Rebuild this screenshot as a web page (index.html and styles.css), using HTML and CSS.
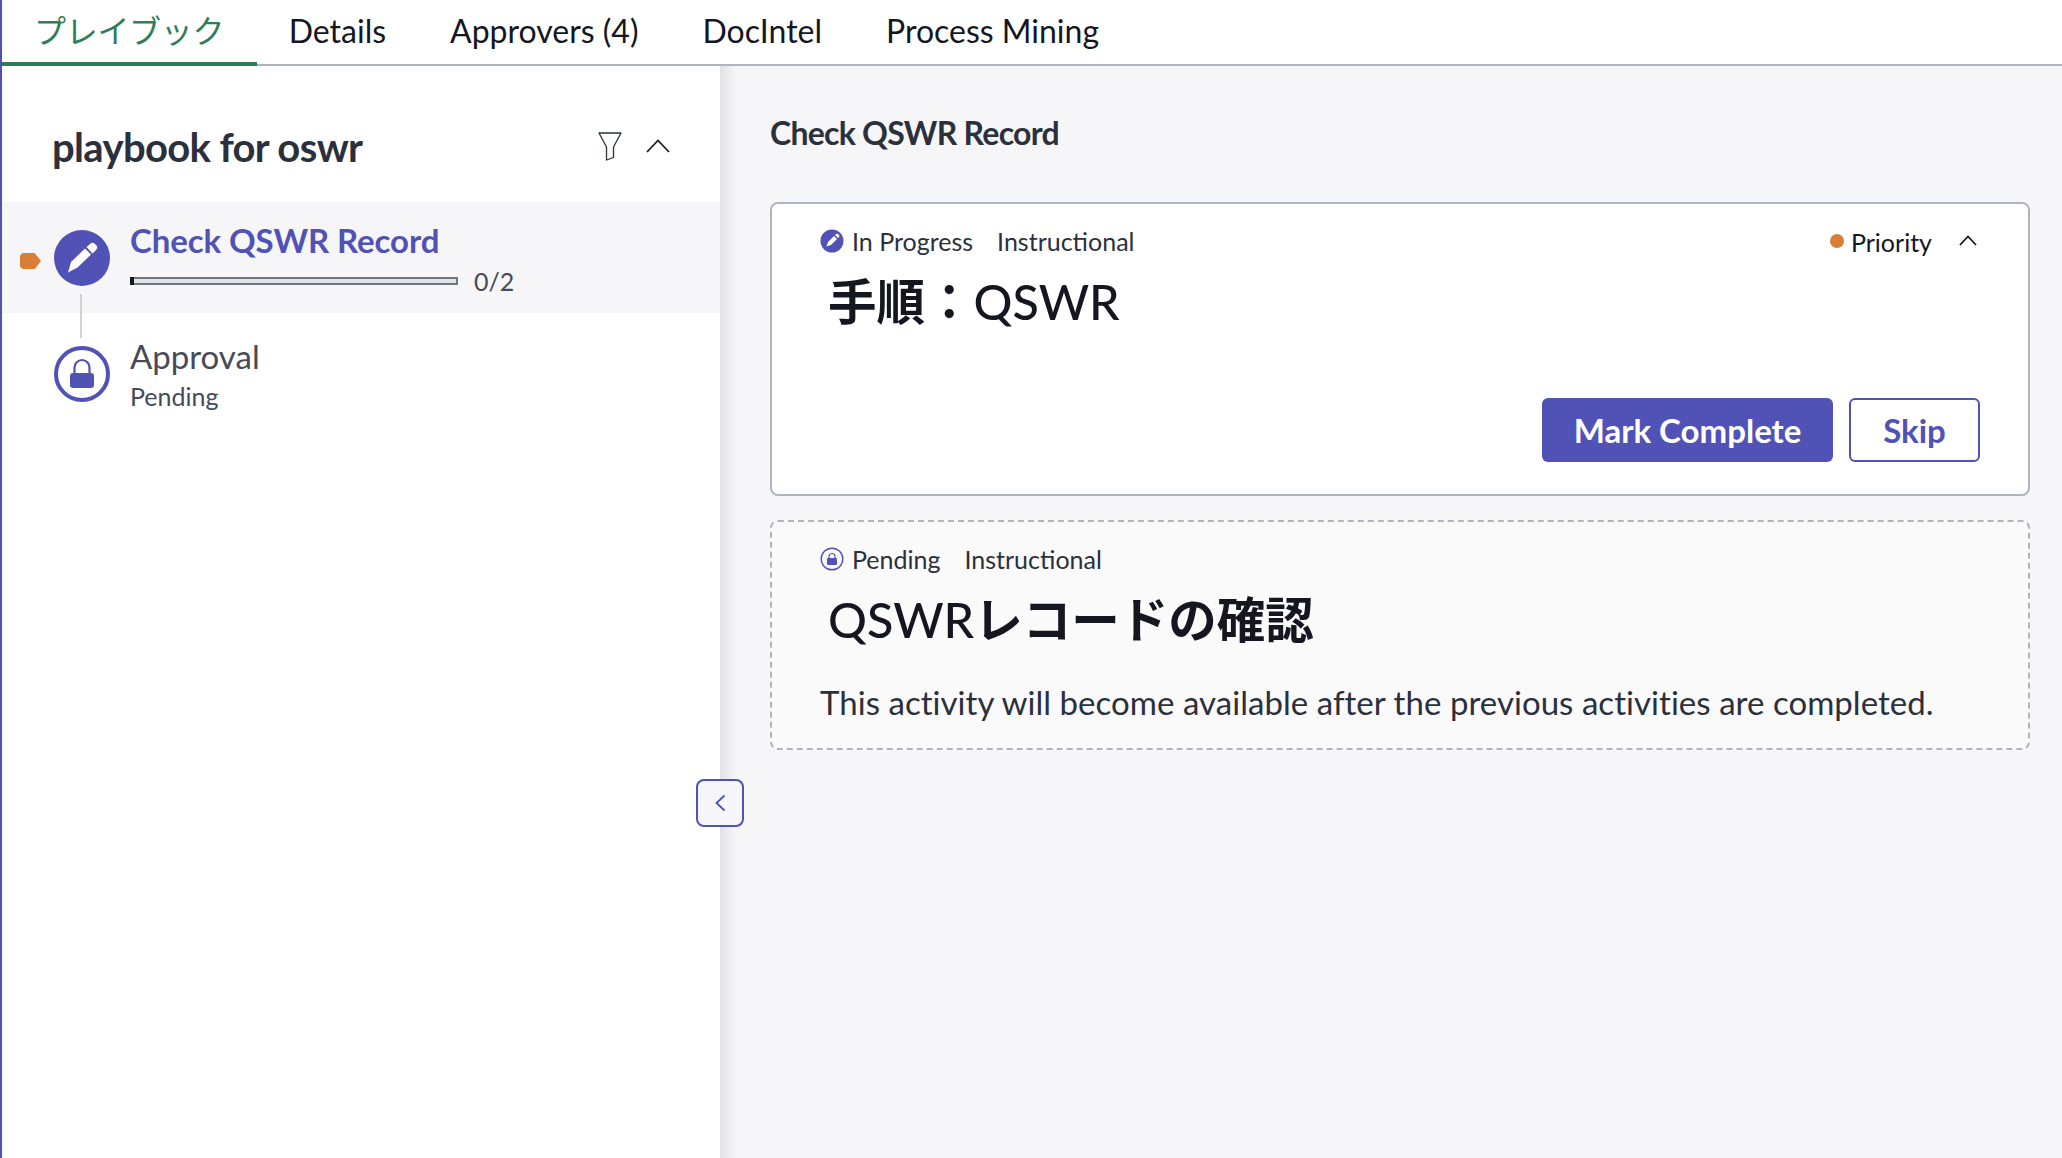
FILE: index.html
```html
<!DOCTYPE html>
<html lang="ja">
<head>
<meta charset="utf-8">
<title>Playbook</title>
<link rel="stylesheet" href="styles.css">
</head>
<body>
<div class="app">
  <nav class="tabs">
    <a class="tab active">プレイブック</a>
    <a class="tab">Details</a>
    <a class="tab">Approvers (4)</a>
    <a class="tab">DocIntel</a>
    <a class="tab">Process Mining</a>
  </nav>
  <div class="content">
    <aside class="sidebar">
      <header class="side-head">
        <h1 class="side-title">playbook for oswr</h1>
        <div class="side-tools">
          <svg class="filter-icon" viewBox="0 0 24 29" width="24" height="29"><path d="M1 1h22l-7.500 14v10.500L8.500 28V15z" fill="none" stroke="#2b303c" stroke-width="1.300" stroke-linejoin="round"/></svg>
          <svg class="chev-lg" viewBox="0 0 24 14" width="24" height="14"><path d="M1 13 12 1.500 23 13" fill="none" stroke="#1b1e26" stroke-width="1.800"/></svg>
        </div>
      </header>
      <div class="step current">
        <span class="flag"></span>
        <span class="step-icon filled">
          <svg viewBox="0 0 56 56" width="56" height="56"><path d="M14 42.500 17 32 31 18.500l6 6L23.500 37.500z" fill="#fff"/><path d="M32.500 17 36 14a3.500 3.500 0 0 1 5 0l1 1a3.500 3.500 0 0 1 0 5l-3.500 3.500z" fill="#fff"/></svg>
        </span>
        <div class="step-body">
          <div class="step-name">Check QSWR Record</div>
          <div class="progress-row">
            <div class="progress"><span class="progress-fill"></span></div>
            <span class="progress-count">0/2</span>
          </div>
        </div>
      </div>
      <div class="connector"></div>
      <div class="step pending">
        <span class="step-icon outlined">
          <svg class="lock-lg" viewBox="0 0 56 56" width="56" height="56"><path d="M20.500 28v-6.500a7.500 7.500 0 0 1 15 0V28" fill="none" stroke="#5052b5" stroke-width="2.200"/><rect x="16" y="27" width="24" height="15" rx="3" fill="#5052b5"/></svg>
        </span>
        <div class="step-body">
          <div class="pending-name">Approval</div>
          <div class="pending-sub">Pending</div>
        </div>
      </div>
    </aside>
    <button class="collapse" type="button" aria-label="Collapse">
      <svg viewBox="0 0 12 18" width="12" height="18"><path d="M10.500 1.500 2.500 9l8 7.500" fill="none" stroke="#5052b5" stroke-width="1.800"/></svg>
    </button>
    <main class="main">
      <h2 class="main-title">Check QSWR Record</h2>
      <section class="card active-card">
        <div class="card-meta">
          <div class="meta-left">
            <svg class="meta-icon" viewBox="0 0 24 24" width="24" height="24"><circle cx="12" cy="12" r="11.500" fill="#5052b5"/><path d="M6.500 17.500l1.500-4.500 6-6 3 3-6 6z M15 6l1-1c.6-.5 1.400-.5 2 0l1 1c.5.600.5 1.400 0 2l-1 1z" fill="#fff"/></svg>
            <span>In Progress</span>
            <span class="meta-type">Instructional</span>
          </div>
          <div class="meta-right">
            <span class="priority-dot"></span>
            <span>Priority</span>
            <svg class="meta-chev" viewBox="0 0 18 11" width="18" height="11"><path d="M1 10 9 1.500 17 10" fill="none" stroke="#14171f" stroke-width="1.800"/></svg>
          </div>
        </div>
        <h3 class="card-title"><span class="cjk">手順：</span>QSWR</h3>
        <div class="card-actions">
          <button class="btn primary" type="button">Mark Complete</button>
          <button class="btn secondary" type="button">Skip</button>
        </div>
      </section>
      <section class="card pending-card">
        <div class="card-meta">
          <div class="meta-left">
            <svg class="meta-icon" viewBox="0 0 24 24" width="24" height="24"><circle cx="12" cy="12" r="10.800" fill="none" stroke="#5052b5" stroke-width="1.400"/><path d="M9 11.500V9.500a3 3 0 0 1 6 0v2" fill="none" stroke="#5052b5" stroke-width="1.200"/><rect x="7" y="11" width="10" height="7" rx="1.300" fill="#5052b5"/></svg>
            <span>Pending</span>
            <span class="meta-type">Instructional</span>
          </div>
        </div>
        <h3 class="card-title">QSWR<span class="cjk">レコードの確認</span></h3>
        <p class="card-note">This activity will become available after the previous activities are completed.</p>
      </section>
    </main>
  </div>
</div>
</body>
</html>
```
FILE: styles.css
```css
* { box-sizing: border-box; }
html, body { margin: 0; height: 100%; overflow: hidden; background: #fff; }
body { font-family: "Lato", "Noto Sans CJK JP", sans-serif; color: #14171f; }
.app { height: 1158px; display: flex; flex-direction: column; border-left: 2px solid #5052b5; }
.tabs { display: flex; height: 66px; flex: none; border-bottom: 2px solid #b0b4be; }
.tab { height: 66px; padding: 0 32px; font-size: 32px; line-height: 62px; color: #14171f; }
.tab.active { color: #2e7d5b; border-bottom: 4px solid #2e7d5b; font-weight: 400; letter-spacing: -0.3px; padding-right: 32.500px; }
.content { flex: 1; display: flex; position: relative; min-height: 0; }
.sidebar { width: 718px; flex: none; background: #fff; }
.side-head { height: 136px; display: flex; justify-content: space-between; align-items: flex-start; padding: 57px 50px 0 50px; }
.side-title { margin: 0; font-size: 40px; line-height: 48px; font-weight: 700; color: #2b303c; letter-spacing: -0.65px; }
.side-tools { display: flex; gap: 24px; align-items: flex-start; padding-top: 9px; }
.chev-lg { margin-top: 7px; }
.step { display: flex; position: relative; padding-left: 52px; gap: 20px; }
.current { height: 111px; background: #f6f6f8; padding-top: 28px; }
.flag { position: absolute; left: 18px; top: 51px; width: 21px; height: 16px; background: #d67f35; clip-path: polygon(0 15%, 12% 0, 70% 0, 100% 50%, 70% 100%, 12% 100%, 0 85%); }
.step-icon { width: 56px; height: 56px; flex: none; border-radius: 50%; display: flex; align-items: center; justify-content: center; }
.filled { background: #5052b5; }
.outlined { background: #fff; border: 4px solid #5052b5; }
.lock-lg { flex: none; }
.step-name { font-size: 33px; line-height: 36px; font-weight: 700; color: #5052b5; margin-top: -8px; letter-spacing: -0.1px; }
.progress-row { display: flex; align-items: center; gap: 16px; margin-top: 10px; height: 26px; }
.progress { width: 328px; height: 8px; background: #dfe2e6; border: 2px solid #71767f; border-left: 0; position: relative; }
.progress-fill { position: absolute; left: 0; top: -2px; width: 4px; height: 8px; background: #14171f; }
.progress-count { font-size: 25px; color: #464b57; }
.connector { width: 2px; height: 44px; background: #d2d3da; margin: -19px 0 0 78px; position: relative; }
.pending { padding-top: 8px; }
.pending-name { font-size: 33px; line-height: 36px; color: #464b57; margin-top: -8px; }
.pending-sub { font-size: 25px; line-height: 30px; color: #464b57; margin-top: 7px; }
.collapse { position: absolute; left: 694px; top: 713px; width: 48px; height: 48px; padding: 0; background: #f5f5fa; border: 2px solid #5052b5; border-radius: 8px; display: flex; align-items: center; justify-content: center; z-index: 2; }
.main { flex: 1; background: #f6f6f8; padding: 0 32px 0 50px; background-image: linear-gradient(to right, #e2e2e4, #f6f6f8 16px); }
.main-title { margin: 0; height: 136px; padding-top: 48px; font-size: 32px; line-height: 38px; font-weight: 700; color: #2b303c; letter-spacing: -0.75px; }
.card { background: #fff; border: 2px solid #b0b4be; border-radius: 8px; padding: 21px 48px 0; }
.active-card { height: 294px; margin-bottom: 24px; }
.pending-card { height: 230px; border: 2px dashed #b0b4be; background: #fafafb; }
.card-meta { display: flex; justify-content: space-between; height: 32px; font-size: 25px; line-height: 32px; color: #2b303c; }
.meta-left { display: flex; align-items: center; gap: 8px; }
.meta-type { margin-left: 16px; }
.meta-right { display: flex; align-items: center; color: #14171f; padding-top: 2px; padding-right: 3px; }
.priority-dot { width: 14px; height: 14px; border-radius: 50%; background: #d67f35; margin-right: 7px; margin-top: -3px; }
.meta-chev { margin-left: 27px; margin-top: -3px; }
.card-title { margin: 14px 0 0 8px; font-size: 48.500px; line-height: 60px; font-weight: 500; color: #14171f; }
.cjk { font-weight: 700; }
.card-actions { display: flex; justify-content: flex-end; gap: 16px; margin-top: 67px; }
.btn { height: 64px; border-radius: 6px; font-family: inherit; font-size: 33px; font-weight: 700; padding: 0; }
.primary { width: 291px; background: #5052b5; border: 0; color: #fff; }
.secondary { width: 131px; background: #fff; border: 2px solid #5052b5; color: #5052b5; }
.card-note { margin: 33px 0 0; font-size: 33px; line-height: 40px; color: #2b303c; letter-spacing: 0.04px; }
```
